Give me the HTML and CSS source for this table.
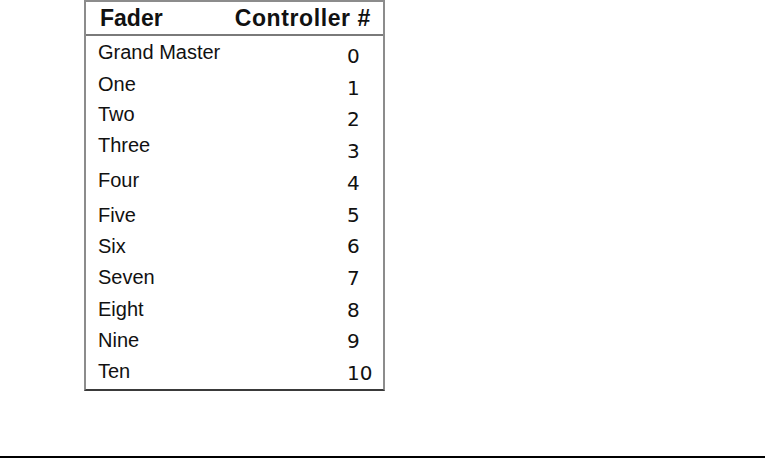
FILE: index.html
```html
<!DOCTYPE html>
<html>
<head>
<meta charset="utf-8">
<link rel="stylesheet" href="styles.css">
</head>
<body>
<div class="page">
  <div class="table">
    <div class="head">
      <span class="h-fader">Fader</span>
      <span class="h-ctrl">Controller #</span>
    </div>
    <div class="body">
      <div class="labels">
        <div class="lab">Grand Master</div>
        <div class="lab">One</div>
        <div class="lab">Two</div>
        <div class="lab">Three</div>
        <div class="lab">Four</div>
        <div class="lab">Five</div>
        <div class="lab">Six</div>
        <div class="lab">Seven</div>
        <div class="lab">Eight</div>
        <div class="lab">Nine</div>
        <div class="lab">Ten</div>
      </div>
      <div class="nums">
        <div class="num">0</div>
        <div class="num">1</div>
        <div class="num">2</div>
        <div class="num">3</div>
        <div class="num">4</div>
        <div class="num">5</div>
        <div class="num">6</div>
        <div class="num">7</div>
        <div class="num">8</div>
        <div class="num">9</div>
        <div class="num">10</div>
      </div>
    </div>
  </div>
  <div class="rule"></div>
</div>
</body>
</html>
```

FILE: styles.css
```css
html, body {
  margin: 0;
  padding: 0;
  background: #ffffff;
}
.page {
  width: 768px;
  height: 458px;
  display: flex;
  flex-direction: column;
  overflow: hidden;
}
.table {
  flex-shrink: 0;
  margin-left: 84px;
  width: 301px;
  height: 391px;
  box-sizing: border-box;
  border: 2px solid #8c8c8c;
  border-bottom-color: #3a3a3a;
  display: flex;
  flex-direction: column;
  font-family: "Liberation Sans", Arial, sans-serif;
  color: #111;
}
.head {
  flex-shrink: 0;
  height: 32px;
  border-bottom: 2px solid #7a7a7a;
  display: flex;
  justify-content: space-between;
  align-items: center;
  padding: 0 12px 0 14px;
  font-weight: bold;
  font-size: 23px;
  line-height: 26px;
}
.h-ctrl {
  letter-spacing: 0.6px;
}
.body {
  flex: 1;
  min-height: 0;
  display: flex;
  justify-content: space-between;
}
.labels {
  display: flex;
  flex-direction: column;
  padding-left: 12px;
  padding-top: 4px;
  font-size: 20px;
  line-height: 24px;
}
.lab:nth-child(2) { margin-top: 8px; }
.lab:nth-child(3) { margin-top: 6px; }
.lab:nth-child(4) { margin-top: 7px; }
.lab:nth-child(5) { margin-top: 11px; }
.lab:nth-child(6) { margin-top: 11px; }
.lab:nth-child(7) { margin-top: 7px; }
.lab:nth-child(8) { margin-top: 7px; }
.lab:nth-child(9) { margin-top: 8px; }
.lab:nth-child(10) { margin-top: 7px; }
.lab:nth-child(11) { margin-top: 7px; }
.nums {
  width: 36px;
  padding-top: 5px;
  display: flex;
  flex-direction: column;
  font-family: "DejaVu Sans", sans-serif;
  font-size: 20px;
  line-height: 31.7px;
}
.rule {
  flex-shrink: 0;
  margin-top: 65px;
  width: 765px;
  height: 2px;
  background: #000;
}
```
